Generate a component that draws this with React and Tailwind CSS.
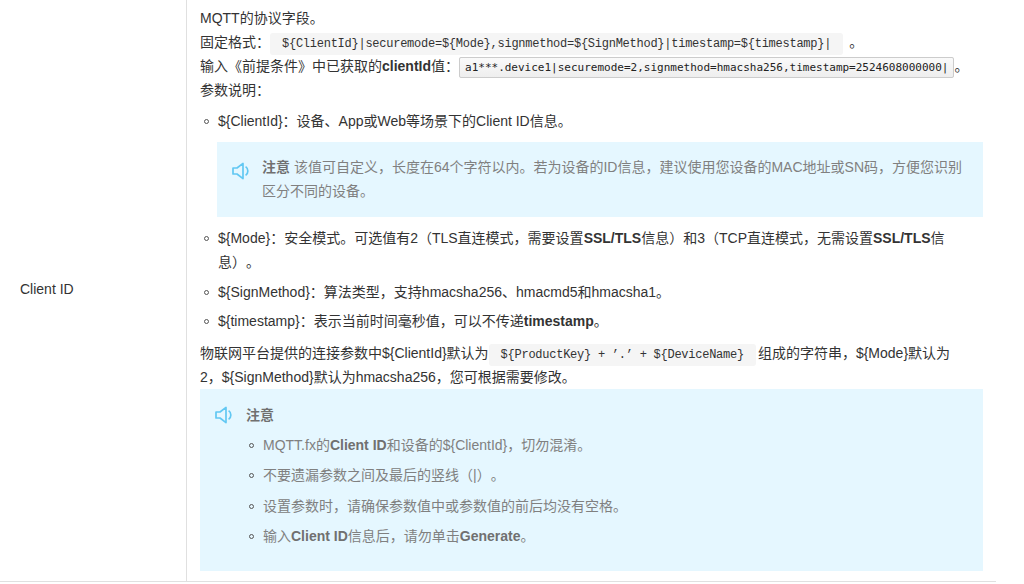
import React from 'react';

const Speaker = ({ className }) => (
    <svg viewBox="0 0 18 18" fill="none" stroke="#62c8f3" strokeWidth="1.7" strokeLinejoin="round" className={className}>
        <path d="M1 6 H5 L11 1.4 V16.6 L5 12 H1 Z" />
        <path d="M13.6 4.6 C16.6 6.6 16.6 11.4 13.6 13.4" strokeWidth="1.7" />
    </svg>
);

const Bullet = ({ children }) => (
    <li className="flex">
        <span className="mt-[10px] mr-[9px] ml-[1px] h-[5px] w-[5px] shrink-0 rounded-full border border-[#555]" />
        <span>{children}</span>
    </li>
);

const serifCode = "rounded-[3px] bg-[#f5f5f5] py-[4px] px-[12px] font-['Liberation_Mono',monospace] text-[12px] leading-none tracking-[-0.25px] text-[#333]";

export default function App() {
    return (
        <div className="h-[584px] w-[1024px] overflow-hidden bg-white font-['Liberation_Sans','Noto_Sans_CJK_SC',sans-serif] text-[14px] leading-[24px] text-[#333] [text-spacing-trim:space-all]">
            <div className="mr-[28px] flex border-b border-[#e0e0e0]">
                <div className="flex w-[186px] shrink-0 items-center pb-[3px] pl-[20px]">Client ID</div>
                <div className="h-[581px] flex-1 overflow-hidden border-l border-[#e0e0e0] pt-[6px] pr-[13px] pl-[13px]">
                    <p>MQTT的协议字段。</p>
                    <p>
                        固定格式：<code className={`${serifCode} mr-[6px]`}>{'${ClientId}|securemode=${Mode},signmethod=${SignMethod}|timestamp=${timestamp}|'}</code>。
                    </p>
                    <p>
                        输入《前提条件》中已获取的<b>clientId</b>值：
                        <code className="rounded-[2px] border border-[#ccc] bg-[linear-gradient(#fafafa,#eee)] px-[5px] py-[3px] font-['DejaVu_Sans_Mono',monospace] text-[11px] leading-none text-[#222]">
                            a1***.device1|securemode=2,signmethod=hmacsha256,timestamp=2524608000000|
                        </code>
                        。
                    </p>
                    <p>参数说明：</p>

                    <ul className="mt-[7px] pl-[3px]">
                        <Bullet>{'${ClientId}：设备、App或Web等场景下的Client ID信息。'}</Bullet>
                    </ul>

                    <div className="mt-[9px] ml-[17px] flex h-[75px] bg-[#e5f7ff] pt-[14px] pr-[16px] pl-[15px] text-[#808080]">
                        <Speaker className="mt-[6px] mr-[12px] h-[18px] w-[18px] shrink-0" />
                        <p className="leading-[23.5px]"><b className="text-[#707070]">注意</b> 该值可自定义，长度在64个字符以内。若为设备的ID信息，建议使用您设备的MAC地址或SN码，方便您识别区分不同的设备。</p>
                    </div>

                    <ul className="mt-[9px] space-y-[5.5px] pl-[3px]">
                        <Bullet>{'${Mode}：安全模式。可选值有2（TLS直连模式，需要设置'}<b>SSL/TLS</b>信息）和3（TCP直连模式，无需设置<b>SSL/TLS</b>信息）。</Bullet>
                        <Bullet>{'${SignMethod}：算法类型，支持hmacsha256、hmacmd5和hmacsha1。'}</Bullet>
                        <Bullet>{'${timestamp}：表示当前时间毫秒值，可以不传递'}<b>timestamp</b>。</Bullet>
                    </ul>

                    <p className="mt-[8px]">
                        {'物联网平台提供的连接参数中${ClientId}默认为'}<code className={`${serifCode} mr-[2px]`}>{'${ProductKey} + ’.’ + ${DeviceName}'}</code>{'组成的字符串，${Mode}默认为2，${SignMethod}默认为hmacsha256，您可根据需要修改。'}
                    </p>

                    <div className="h-[182px] bg-[#e5f7ff] pt-[14px] pl-[15px] text-[#808080]">
                        <div className="flex items-center">
                            <Speaker className="mr-[13px] h-[18px] w-[18px] shrink-0" />
                            <b className="text-[#707070]">注意</b>
                        </div>
                        <ul className="mt-[6px] space-y-[6.3px] pl-[33px]">
                            <Bullet>MQTT.fx的<b className="text-[#707070]">Client ID</b>{'和设备的${ClientId}，切勿混淆。'}</Bullet>
                            <Bullet>不要遗漏参数之间及最后的竖线（|）。</Bullet>
                            <Bullet>设置参数时，请确保参数值中或参数值的前后均没有空格。</Bullet>
                            <Bullet>输入<b className="text-[#707070]">Client ID</b>信息后，请勿单击<b className="text-[#707070]">Generate</b>。</Bullet>
                        </ul>
                    </div>
                </div>
            </div>
        </div>
    );
}
